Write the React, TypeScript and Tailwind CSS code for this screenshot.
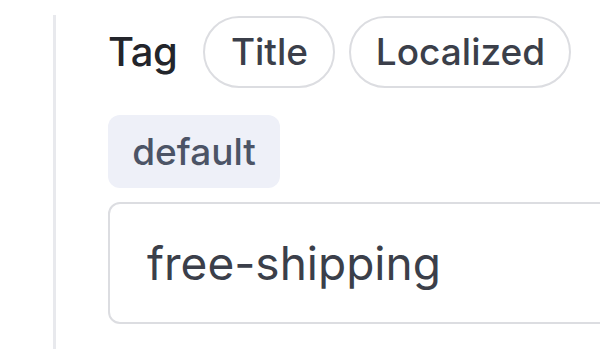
export default function App() {
  return (
    <div
      className="w-[600px] h-[355px] overflow-hidden bg-white"
      style={{ fontFamily: "Inter, 'Noto Sans', sans-serif" }}
    >
      <div className="ml-[53px] mt-[15px] h-[334px] border-l-[3px] border-[#e8e9ed] pl-[52px]">
        <div className="flex items-center pt-[1px]">
          <span className="text-[40px] font-medium text-[#23252b] tracking-[-0.01em] mr-[26px]">Tag</span>
          <span className="h-[72px] w-[132px] shrink-0 rounded-full border-2 border-[#dcdde1] flex items-center justify-center text-[37px] font-medium text-[#3b3f4a]">
            Title
          </span>
          <span className="ml-[14px] h-[72px] w-[222px] shrink-0 rounded-full border-2 border-[#dcdde1] flex items-center justify-center text-[37px] font-medium text-[#3b3f4a]">
            Localized
          </span>
        </div>
        <div className="mt-[27px] h-[73px] w-[172px] rounded-[12px] bg-[#eef0f8] flex items-center justify-center text-[37px] font-medium text-[#4c5466]">
          default
        </div>
        <div className="mt-[14px] h-[122px] w-[560px] rounded-[12px] border-2 border-[#dcdde1] flex items-center pl-[37px] text-[46px] text-[#3b3f4a]">
          free-shipping
        </div>
      </div>
    </div>
  );
}
